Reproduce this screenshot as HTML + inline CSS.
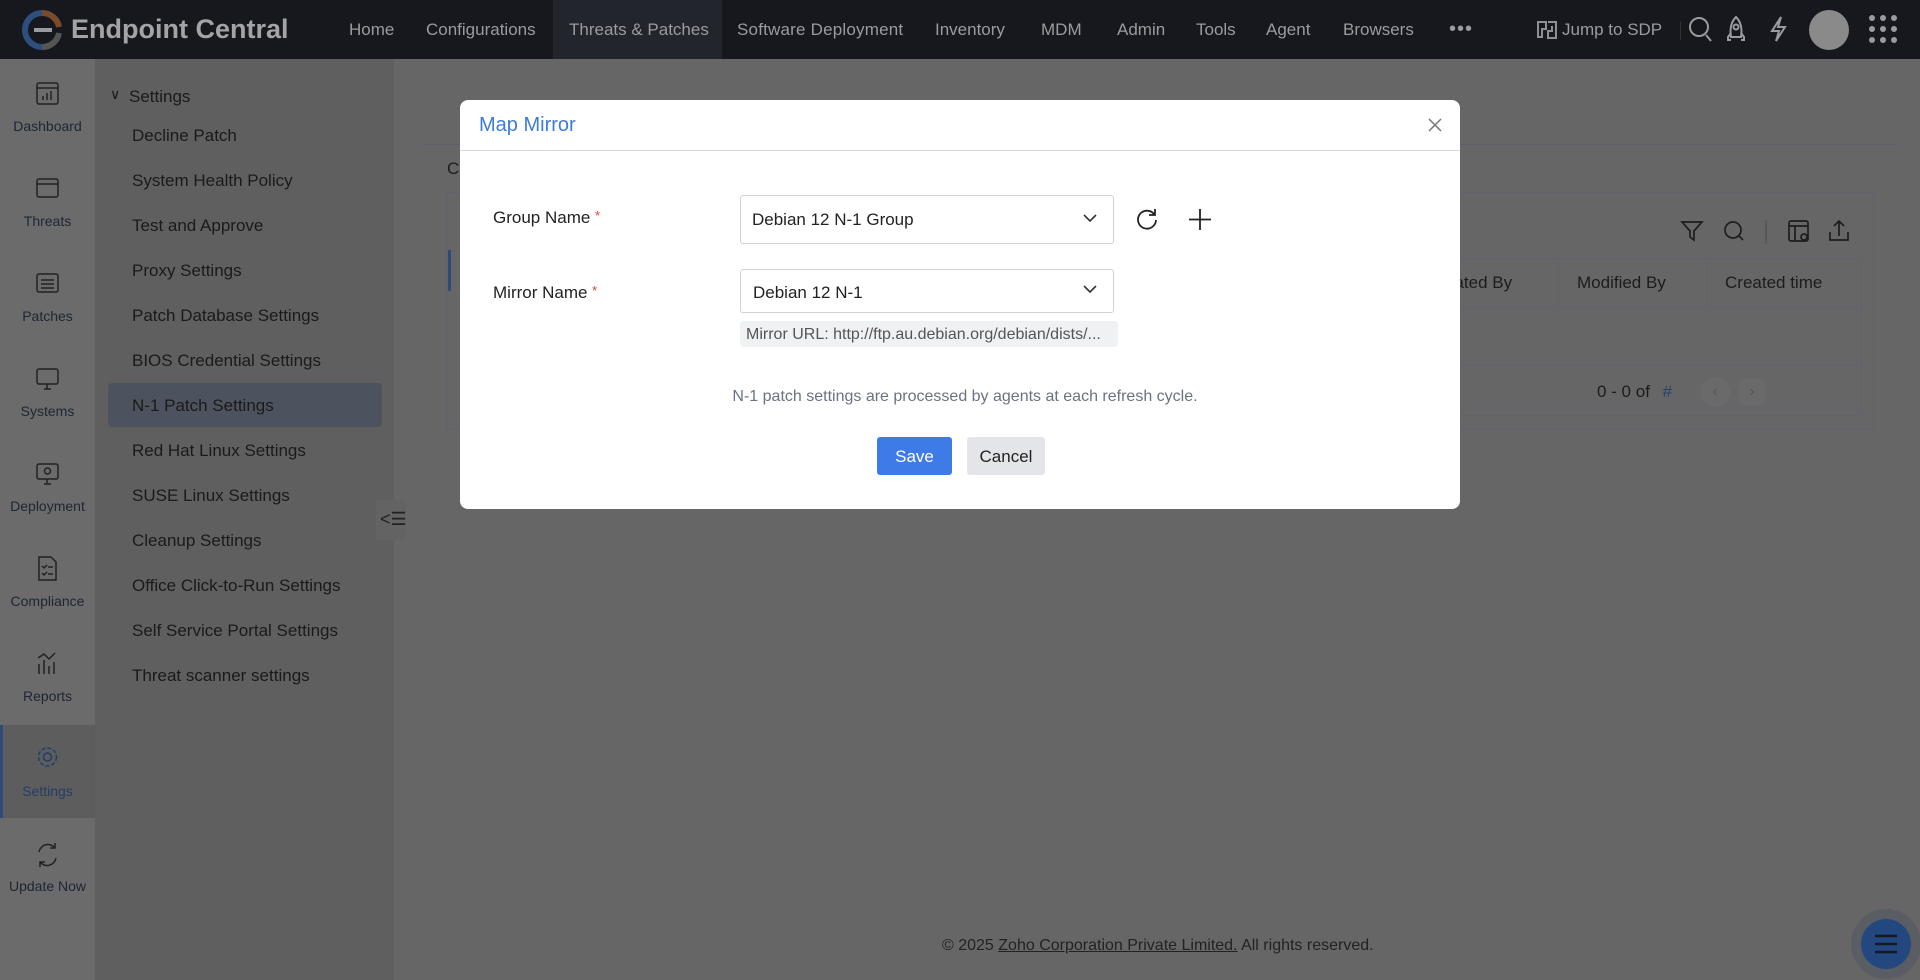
<!DOCTYPE html>
<html><head><meta charset="utf-8"><style>
*{box-sizing:border-box;margin:0;padding:0}
body{width:1920px;height:980px;overflow:hidden;background:#666;font-family:"Liberation Sans",sans-serif;position:relative}
.abs{position:absolute}
.top{left:0;top:0;width:1920px;height:59px;background:#17181d}
.nav{top:0;height:59px;line-height:59px;font-size:17px;color:#9a9ba0;white-space:nowrap}
.rail{left:0;top:59px;width:95px;height:921px;background:#6b6b6b}
.ri{left:0;width:95px;text-align:center;font-size:14px;color:#1e2633}
.sub{left:95px;top:59px;width:299px;height:921px;background:#5f5f5f}
.si{left:132px;font-size:17px;color:#1a1a1a;white-space:nowrap}
.t{color:#1c1c1c;font-size:17px;white-space:nowrap}
</style></head><body>
<div class="abs top"></div>
<svg class="abs" style="left:22px;top:10px" width="40" height="40" viewBox="0 0 40 40"><path d="M20 3 A17 17 0 0 0 20 37" fill="none" stroke="#2d4f80" stroke-width="6"/><path d="M20 3 A17 17 0 0 1 37 17" fill="none" stroke="#7a4a2c" stroke-width="6"/><path d="M37 23 A17 17 0 0 1 20 37" fill="none" stroke="#555" stroke-width="6"/><path d="M12 20 H30" stroke="#9a9aa0" stroke-width="4"/></svg>
<div class="abs nav" style="left:71px;font-size:27px;font-weight:bold;color:#a4a4a6">Endpoint Central</div>
<div class="abs" style="left:553px;top:0;width:169px;height:59px;background:#23252c"></div>
<div class="abs nav" style="left:349px">Home</div>
<div class="abs nav" style="left:426px">Configurations</div>
<div class="abs nav" style="left:569px">Threats &amp; Patches</div>
<div class="abs nav" style="left:737px;letter-spacing:0.2px">Software Deployment</div>
<div class="abs nav" style="left:935px">Inventory</div>
<div class="abs nav" style="left:1041px">MDM</div>
<div class="abs nav" style="left:1117px">Admin</div>
<div class="abs nav" style="left:1196px">Tools</div>
<div class="abs nav" style="left:1266px">Agent</div>
<div class="abs nav" style="left:1343px">Browsers</div>
<div class="abs nav" style="left:1449px;font-size:20px;letter-spacing:1px">•••</div>
<svg class="abs" style="left:1537px;top:21px" width="20" height="18" viewBox="0 0 20 18"><path d="M1 1h8v7H5v8H1z M11 1h8v16h-8v-7h4V5" fill="none" stroke="#8e8f94" stroke-width="2"/></svg>
<div class="abs nav" style="left:1562px">Jump to SDP</div>
<div class="abs" style="left:1680px;top:22px;width:1px;height:18px;background:#333"></div>
<svg class="abs" style="left:1688px;top:16px" width="26" height="28" viewBox="0 0 26 28" fill="none" stroke="#9a9ba0" stroke-width="2"><circle cx="11" cy="11" r="9"/><path d="M18 19l5 6"/></svg>
<svg class="abs" style="left:1725px;top:15px" width="22" height="28" viewBox="0 0 22 28" fill="none" stroke="#9a9ba0" stroke-width="2"><path d="M11 2C5 8 5 16 6 22h10c1-6 1-14-5-20z"/><circle cx="11" cy="12" r="2.5"/><path d="M6 18l-3 4v3h3M16 18l3 4v3h-3"/></svg>
<svg class="abs" style="left:1767px;top:15px" width="22" height="28" viewBox="0 0 22 28" fill="none" stroke="#9a9ba0" stroke-width="2"><path d="M14 2L5 16h7l-3 10 9-14h-7z"/></svg>
<div class="abs" style="left:1809px;top:10px;width:40px;height:40px;border-radius:50%;background:#8a8a8a"></div>
<svg class="abs" style="left:1868px;top:14px" width="30" height="30"><g fill="#9a9ba0"><circle cx="4" cy="4" r="3"/><circle cx="15" cy="4" r="3"/><circle cx="26" cy="4" r="3"/><circle cx="4" cy="15" r="3"/><circle cx="15" cy="15" r="3"/><circle cx="26" cy="15" r="3"/><circle cx="4" cy="26" r="3"/><circle cx="15" cy="26" r="3"/><circle cx="26" cy="26" r="3"/></g></svg>

<div class="abs rail"></div>
<div class="abs" style="left:0;top:725px;width:95px;height:93px;background:#5d5d5d;border-left:3px solid #2c4a7a"></div>
<div class="abs ri" style="top:118px">Dashboard</div>
<div class="abs ri" style="top:213px">Threats</div>
<div class="abs ri" style="top:308px">Patches</div>
<div class="abs ri" style="top:403px">Systems</div>
<div class="abs ri" style="top:498px">Deployment</div>
<div class="abs ri" style="top:593px">Compliance</div>
<div class="abs ri" style="top:688px">Reports</div>
<div class="abs ri" style="top:783px;color:#233d6b">Settings</div>
<div class="abs ri" style="top:878px">Update Now</div>
<svg class="abs" style="left:0;top:80px" width="95" height="800" fill="none" stroke="#222" stroke-width="1.5">
<rect x="37" y="3" width="21" height="21" rx="2"/><path d="M37 8h21M43 20v-4M47 20v-7M51 20v-9"/>
<rect x="37" y="99" width="21" height="18" rx="2"/><path d="M37 104h21"/>
<rect x="37" y="194" width="21" height="18" rx="2"/><path d="M41 200h13M41 204h13M41 208h13"/>
<rect x="37" y="289" width="21" height="15" rx="2"/><path d="M44 309h7M47 304v5"/>
<rect x="37" y="384" width="21" height="15" rx="2"/><circle cx="47.5" cy="391" r="3"/><path d="M44 404h7M47 399v5"/>
<path d="M39 477h12l5 5v18H39z"/><path d="M42 486l2 2 3-3M48 487h5M42 493l2 2 3-3M48 494h5"/>
<path d="M39 594v-10M44 594v-14M49 594v-8M54 594v-12M38 578l6-4 5 5 6-6"/>
<circle cx="47.5" cy="677" r="4" stroke="#233d6b"/><circle cx="47.5" cy="677" r="9" stroke="#233d6b" stroke-dasharray="4 2"/>
<path d="M39 772a9 9 0 0 1 16-4M56 778a9 9 0 0 1-16 4M55 763v5h-5M40 787v-5h5"/>
</svg>

<div class="abs sub"></div>
<div class="abs" style="left:108px;top:383px;width:274px;height:44px;background:#4d535e;border-radius:4px"></div>
<div class="abs si" style="left:110px;top:86px;font-size:14px">∨</div>
<div class="abs si" style="left:129px;top:87px">Settings</div>
<div class="abs si" style="top:126px">Decline Patch</div>
<div class="abs si" style="top:171px">System Health Policy</div>
<div class="abs si" style="top:216px">Test and Approve</div>
<div class="abs si" style="top:261px">Proxy Settings</div>
<div class="abs si" style="top:306px">Patch Database Settings</div>
<div class="abs si" style="top:351px">BIOS Credential Settings</div>
<div class="abs si" style="top:396px">N-1 Patch Settings</div>
<div class="abs si" style="top:441px">Red Hat Linux Settings</div>
<div class="abs si" style="top:486px">SUSE Linux Settings</div>
<div class="abs si" style="top:531px">Cleanup Settings</div>
<div class="abs si" style="top:576px">Office Click-to-Run Settings</div>
<div class="abs si" style="top:621px">Self Service Portal Settings</div>
<div class="abs si" style="top:666px">Threat scanner settings</div>
<div class="abs" style="left:376px;top:500px;width:30px;height:40px;background:#636363;border-radius:4px"></div>
<div class="abs" style="left:380px;top:509px;font-size:18px;color:#222">&lt;☰</div>

<div class="abs" style="left:422px;top:144px;width:1476px;height:1px;background:#5c6070"></div>
<div class="abs t" style="left:447px;top:159px">C</div>
<div class="abs" style="left:447px;top:192px;width:1427px;height:238px;border:1px solid #5f6370"></div>
<div class="abs" style="left:448px;top:250px;width:3px;height:41px;background:#2c4a7a"></div>
<div class="abs" style="left:1440px;top:258px;width:422px;height:158px;border:1px solid #5f6370;border-radius:4px"></div>
<div class="abs" style="left:1440px;top:307px;width:422px;height:1px;background:#5f6370"></div>
<div class="abs" style="left:1440px;top:365px;width:422px;height:1px;background:#5f6370"></div>
<div class="abs" style="left:1558px;top:258px;width:1px;height:49px;background:#5f6370"></div>
<div class="abs" style="left:1706px;top:258px;width:1px;height:49px;background:#5f6370"></div>
<div class="abs t" style="left:1445px;top:273px">eated By</div>
<div class="abs t" style="left:1577px;top:273px">Modified By</div>
<div class="abs t" style="left:1725px;top:273px">Created time</div>
<div class="abs t" style="left:1597px;top:382px">0 - 0 of <span style="color:#23406e;margin-left:8px">#</span></div>
<div class="abs" style="left:1700px;top:377px;width:30px;height:30px;border-radius:50%;background:#6a6a6a;color:#555;text-align:center;line-height:30px">‹</div>
<div class="abs" style="left:1737px;top:377px;width:30px;height:30px;border-radius:50%;background:#6a6a6a;color:#555;text-align:center;line-height:30px">›</div>
<svg class="abs" style="left:1680px;top:218px" width="180" height="28" fill="none" stroke="#1e1e1e" stroke-width="1.7"><path d="M2 4h20l-8 9v9l-4-3v-6z"/><circle cx="53" cy="12" r="8"/><path d="M59 18l4 4"/><path d="M86 2v24" stroke="#555"/><rect x="109" y="3" width="19" height="20" rx="2"/><path d="M109 8h19M115 8v15"/><circle cx="124" cy="19" r="3"/><path d="M150 14v8h18v-8M159 18V3M154 8l5-5 5 5"/></svg>
<div class="abs" style="left:942px;top:937px;font-size:16px;color:#222;white-space:nowrap">© 2025 <span style="text-decoration:underline">Zoho Corporation Private Limited.</span> All rights reserved.</div>
<div class="abs" style="left:1851px;top:909px;width:70px;height:70px;border-radius:50%;background:#5a5d64"></div>
<div class="abs" style="left:1861px;top:919px;width:50px;height:50px;border-radius:50%;background:#23487f"></div>
<svg class="abs" style="left:1874px;top:933px" width="24" height="22" stroke="#151a22" stroke-width="2.5"><path d="M1 3h22M1 11h22M1 19h22"/></svg>

<div class="abs" style="left:460px;top:100px;width:1000px;height:409px;background:#fff;border-radius:8px"></div>
<div class="abs" style="left:479px;top:114px;font-size:20px;color:#3d7be0">Map Mirror</div>
<svg class="abs" style="left:1428px;top:118px" width="14" height="14" stroke="#777" stroke-width="1.5"><path d="M1 1l12 12M13 1L1 13"/></svg>
<div class="abs" style="left:460px;top:150px;width:1000px;height:1px;background:#d6d8de"></div>
<div class="abs t" style="left:493px;top:208px;color:#222">Group Name <span style="color:#e53935;font-size:13px;vertical-align:top">*</span></div>
<div class="abs t" style="left:493px;top:283px;color:#222">Mirror Name <span style="color:#e53935;font-size:13px;vertical-align:top">*</span></div>
<div class="abs" style="left:740px;top:195px;width:374px;height:49px;border:1px solid #cfd2d8;border-radius:3px"></div>
<div class="abs t" style="left:752px;top:210px;color:#222">Debian 12 N-1 Group</div>
<div class="abs" style="left:740px;top:269px;width:374px;height:44px;border:1px solid #cfd2d8;border-radius:3px"></div>
<div class="abs t" style="left:753px;top:283px;color:#222">Debian 12 N-1</div>
<svg class="abs" style="left:1082px;top:212px" width="16" height="100" fill="none" stroke="#333" stroke-width="1.6"><path d="M2 3l6 6 6-6M2 74l6 6 6-6"/></svg>
<svg class="abs" style="left:1134px;top:206px" width="80" height="26" fill="none" stroke="#222" stroke-width="1.8"><path d="M20 8A9 9 0 1 0 22 14M21 3v6h-6"/><path d="M66 3v21M55 13.5h22"/></svg>
<div class="abs" style="left:740px;top:321px;width:378px;height:26px;background:#f0f1f3;border-radius:3px;font-size:16px;color:#555;line-height:27px;padding-left:6px;white-space:nowrap">Mirror URL: http://ftp.au.debian.org/debian/dists/...</div>
<div class="abs" style="left:460px;top:388px;width:1000px;text-align:center;font-size:16px;color:#6b7280;padding-left:10px">N-1 patch settings are processed by agents at each refresh cycle.</div>
<div class="abs" style="left:877px;top:437px;width:75px;height:38px;background:#3e7be6;border-radius:3px;color:#fff;font-size:17px;text-align:center;line-height:39px">Save</div>
<div class="abs" style="left:967px;top:437px;width:78px;height:38px;background:#e4e5e9;border-radius:3px;color:#222;font-size:17px;text-align:center;line-height:39px">Cancel</div>
</body></html>
